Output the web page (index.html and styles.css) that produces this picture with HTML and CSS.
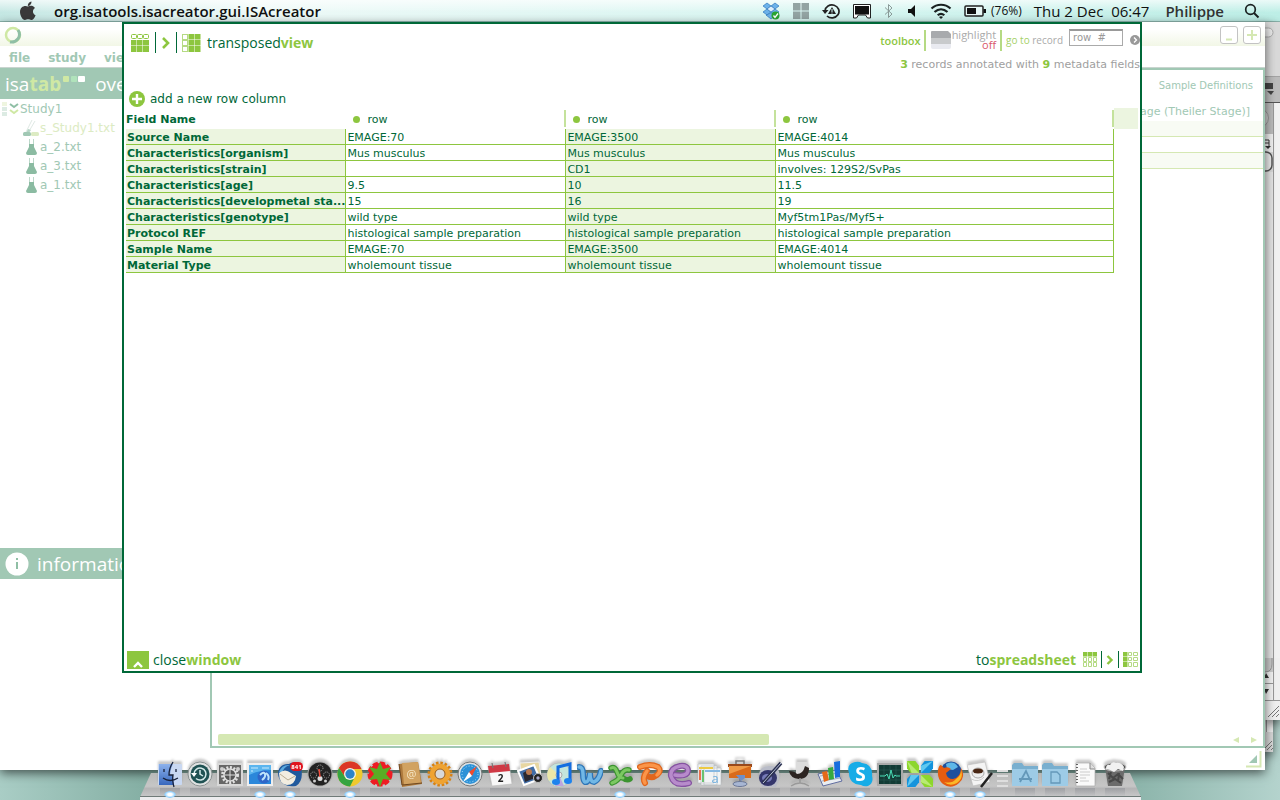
FILE: index.html
```html
<!DOCTYPE html>
<html lang="en">
<head>
<meta charset="utf-8">
<title>ISAcreator</title>
<link rel="stylesheet" href="styles.css">
</head>
<body>
<header class="menubar">
  <svg class="apple" width="18" height="20" viewBox="0 0 18 20"><path fill="#3a3a3a" d="M9 5.600C10.500 4.600 14 4 16 7c-3 2-2.500 6 .6 7.200C15.500 17 14 19 12.300 19c-1.200 0-1.800-.7-3.200-.7s-2 .7-3.200.7C3.500 19 1 14.500 1 11c0-5 4.500-7 8-5.400zM8.800 5C8.600 2.500 10.300.8 12.500.4c.2 2.400-1.500 4.400-3.700 4.600z"/></svg>
  <span class="app-name">org.isatools.isacreator.gui.ISAcreator</span>
  <div class="status">
    <svg width="18" height="18" viewBox="0 0 18 18"><g fill="#6cb2ea" stroke="#2f78bd" stroke-width=".7"><path d="M5 1l4 3-4 3-4-3zM13 1l4 3-4 3-4-3zM5 7l4 3-4 3-4-3zM13 7l4 3-4 3-4-3z"/><path fill="#dceefb" d="M9 4l4 3-4 3-4-3z"/><path d="M4 13l5-2 5 2-5 4z"/></g><circle cx="13.500" cy="13.500" r="4" fill="#2aa532"/><path d="M11.500 13.500l1.500 2 3-4" fill="none" stroke="#fff" stroke-width="1.300"/></svg>
    <svg width="18" height="16" viewBox="0 0 18 16"><path fill="#93a4a3" d="M1 0h7.500v7.500H1zM9.500 0H17v7.500H9.500zM1 8.500h7.500V16H1zM9.500 8.500H17V16H9.500z"/></svg>
    <svg width="18" height="16" viewBox="0 0 18 16"><path d="M3 8a7 6.500 0 1 1 2 5" fill="none" stroke="#222" stroke-width="1.700"/><path fill="#222" d="M0 7h6.500L3 11z"/><path d="M10 4l4 7H6z" fill="#222"/><path d="M10 6v3M10 9.500v1" stroke="#dff" stroke-width="1"/></svg>
    <svg width="20" height="16" viewBox="0 0 20 16"><path d="M1.500 15V1.500h17V15h-3l-2-3h-7l-2 3z" fill="#fff" stroke="#222"/><path fill="#111" d="M3 3h14v8.500H3z"/></svg>
    <svg width="10" height="16" viewBox="0 0 10 16"><path d="M1 4.500l7 6.500-3.500 3.500v-13L8 5 1 11.500" fill="none" stroke="#8b9b99" stroke-width="1"/></svg>
    <svg width="12" height="14" viewBox="0 0 12 14"><path fill="#111" d="M2 5h3l4-4v12L5 9H2z"/></svg>
    <svg width="22" height="16" viewBox="0 0 22 16"><g fill="none" stroke="#1b2222" stroke-width="2.200"><path d="M1.500 5.500c5.500-5 13.500-5 19 0"/><path d="M4.500 9c4-3.600 9-3.600 13 0"/><path d="M7.700 12.300c2-1.800 4.600-1.800 6.600 0"/></g><path fill="#1b2222" d="M9 14q2-1.500 4 0l-2 2z"/></svg>
    <span class="battery"><svg width="22" height="12" viewBox="0 0 22 12"><rect x="1" y="1" width="18" height="10" rx="1" fill="#e8f8f6" stroke="#222" stroke-width="1.500"/><path fill="#111" d="M3 3h9v6H3zM19.500 4H22v4h-2.500z"/></svg><span>(76%)</span></span>
    <time>Thu 2 Dec&nbsp; 06:47</time>
    <span class="user">Philippe</span>
    <svg class="search" width="16" height="16" viewBox="0 0 16 16"><circle cx="6.500" cy="6.500" r="4.800" fill="none" stroke="#1b2222" stroke-width="1.700"/><path d="M10 10l4.500 4.500" stroke="#1b2222" stroke-width="2"/></svg>
  </div>
</header>

<main class="desktop">
  <div class="back-window low"><svg width="15" height="20" viewBox="0 0 15 20"><path d="M5 18l9-9M9 18l5-5M13 18l2-2" stroke="#777"/></svg></div>
  <div class="back-window">
    <svg width="15" height="150" viewBox="6 0 15 150">
      <rect x="-9" y="6" width="23" height="9" rx="4.500" fill="#ececec" stroke="#aaa"/>
      <path d="M0 54.500h21" stroke="#a4a4a4"/><path d="M0 80.500h21" stroke="#555"/><path fill="#bcbcbc" d="M0 55h21v25H0z"/>
      <path fill="#444" d="M2 61h12v6H2zM8 69h7l-3 4z"/>
      <path fill="#bdbdbd" d="M0 81h14v31H0z"/><path fill="#f2f2f2" d="M0 112h14v18H0zM15 81h6v69h-6z"/><path d="M14.500 81v69" stroke="#999"/>
      <circle cx="0" cy="96" r="9.500" fill="#ccc" stroke="#999"/>
      <path d="M4 124v-6h6v6M5 121h5" fill="none" stroke="#333"/><path fill="#333" d="M6 124h6l-3 3z"/>
      <rect x="-12" y="130" width="25" height="19" rx="6" fill="#eee" stroke="#555" stroke-width="1.500"/>
    </svg>
    <svg width="15" height="62" viewBox="6 0 15 62"><path fill="#ccc" d="M0 0h14v42H0z"/><path fill="#f4f4f4" d="M0 14h14v28H0z"/><path d="M13 0v6q0 8-7 8" fill="none" stroke="#999"/><path fill="#333" d="M5 20l2-5 3 5zM5 31h5l-3 5z"/><path d="M0 25.500h14M14.500 0v42M0 42.500h21" stroke="#999"/><path fill="#f0f0f0" d="M0 43h21v19H0zM15 0h6v42h-6z"/><path d="M9 59l11-11M13 59l7-7M17 59l3-3" stroke="#777"/></svg>
  </div>

  <section class="app-window">
    <div class="titlebar">
      <svg width="18" height="20" viewBox="0 0 18 20"><circle cx="9" cy="10" r="7" fill="none" stroke="#cfe8a4" stroke-width="2.500"/><path d="M14 5c4 6-1 13-8 12" fill="none" stroke="#8fbfa5" stroke-width="3"/></svg>
      <div class="win-buttons">
        <button type="button" aria-label="Minimize"><svg width="16" height="16" viewBox="0 0 16 16"><path d="M5 12.500h6" stroke="#d5e8b3" stroke-width="2"/></svg></button>
        <button type="button" aria-label="Maximize"><svg width="16" height="16" viewBox="0 0 16 16"><path d="M3 8h10M8 3v10" stroke="#d5e8b3" stroke-width="2"/></svg></button>
      </div>
    </div>
    <nav class="app-menu"><a href="#file">file</a><a href="#study">study</a><a href="#view">view</a></nav>
    <div class="app-body">
      <aside class="side">
        <h2 class="banner"><span>isa<b>tab</b></span><svg width="22" height="22" viewBox="0 0 22 22"><rect y="3" width="6" height="6" rx="1" fill="#cfe8a4"/><rect x="8" y="3" width="6" height="6" rx="1" fill="#b0e3bb"/><rect x="15" y="3" width="7" height="6" rx="1" fill="#fff"/></svg><span class="over">overview</span></h2>
        <ul class="tree">
          <li class="root"><svg width="16" height="16" viewBox="0 0 16 16"><path fill="#eef5df" d="M1 1h5v4H1z"/><path fill="#dcebe3" d="M1 6h5v4H1zM1 11h5v4H1z"/><path d="M9 3l4 3 4-3" fill="none" stroke="#8fbfa5" stroke-width="2"/><path d="M9 9l4 3 4-3" fill="none" stroke="#cfe8a4" stroke-width="2"/></svg>Study1</li>
          <li class="selected"><svg width="18" height="18" viewBox="0 0 18 18"><path d="M10 1L4 13M13 2L6 14" stroke="#dfe9e4"/><path d="M6 10l3 1-3 4-2-1z" fill="#b7d6c6"/><rect x="1" y="13" width="8" height="4" rx="1.500" fill="#a1c8b4"/><rect x="9" y="13" width="8" height="4" rx="1.500" fill="#dcebc3"/></svg>s_Study1.txt</li>
          <li><svg width="18" height="18" viewBox="0 0 18 18"><path d="M7.500 1v5M11.500 1v5" stroke="#bcd8ca"/><path fill="#8bbba2" d="M7 6h5v3l3 6q0 2-2 2H6q-2 0-2-2l3-6z"/></svg>a_2.txt</li>
          <li><svg width="18" height="18" viewBox="0 0 18 18"><path d="M7.500 1v5M11.500 1v5" stroke="#bcd8ca"/><path fill="#8bbba2" d="M7 6h5v3l3 6q0 2-2 2H6q-2 0-2-2l3-6z"/></svg>a_3.txt</li>
          <li><svg width="18" height="18" viewBox="0 0 18 18"><path d="M7.500 1v5M11.500 1v5" stroke="#bcd8ca"/><path fill="#8bbba2" d="M7 6h5v3l3 6q0 2-2 2H6q-2 0-2-2l3-6z"/></svg>a_1.txt</li>
        </ul>
        <div class="info">
          <h2 class="banner"><svg width="24" height="24" viewBox="0 0 24 24"><circle cx="12" cy="12" r="11.500" fill="#fff"/><path d="M11 10h2v7h-2zM11 6h2v2h-2z" fill="#8fbfa5"/></svg><span>information</span></h2>
        </div>
      </aside>
      <section class="sheet">
        <p class="sheet-name">Sample Definitions</p>
        <p class="sheet-col">Stage (Theiler Stage)]</p>
        <div class="stripe tint"></div><div class="stripe"></div><div class="stripe tint"></div>
        <div class="hscroll"><span class="thumb"></span><svg width="24" height="8" viewBox="0 0 24 8"><path fill="#d5e8b3" d="M6 1v6L0 4zM18 1v6l6-3z"/></svg></div>
      </section>
    </div>
    <div class="app-foot"><svg width="17" height="17" viewBox="0 0 17 17"><path d="M0 15.500h14.500V0" fill="none" stroke="#d5e8b3" stroke-width="2"/><path fill="#a1c8b4" d="M11 4v8H3z"/></svg></div>
  </section>

  <section class="popup">
    <header class="pop-head">
      <h1 class="title">
        <svg width="20" height="20" viewBox="0 0 20 20"><g fill="none" stroke="#8dc63f"><rect x="1.500" y="1.500" width="5" height="4" rx="1"/><rect x="7.500" y="1.500" width="5" height="4" rx="1"/><rect x="13.500" y="1.500" width="5" height="4" rx="1"/></g><path fill="#8dc63f" d="M1 7h5.500v5.500H1zM7 7h5.500v5.500H7zM13 7h6v5.500h-6zM1 13h5.500v6H1zM7 13h5.500v6H7zM13 13h6v6h-6z"/></svg>
        <i class="bar dark"></i>
        <svg width="10" height="12" viewBox="0 0 10 12"><path d="M2 1l5 5-5 5" fill="none" stroke="#8dc63f" stroke-width="2.600"/></svg>
        <i class="bar dark"></i>
        <svg width="20" height="20" viewBox="0 0 20 20"><g fill="none" stroke="#b5da83"><rect x=".5" y="1.500" width="5" height="5"/><rect x=".5" y="7.500" width="5" height="5"/><rect x=".5" y="13.500" width="5" height="5"/></g><path fill="#8dc63f" d="M6.500 1H12v5.500H6.500zM12.500 1h6v5.500h-6zM6.500 7H12v5.500H6.500zM12.500 7h6v5.500h-6zM6.500 13H12v6H6.500zM12.500 13h6v6h-6z"/></svg>
        <span class="title-text">transposed<b>view</b></span>
      </h1>
      <div class="tools">
        <div class="toolbar">
          <span class="toolbox">toolbox</span><i class="bar"></i>
          <button type="button" class="highlight"><svg width="20" height="20" viewBox="0 0 20 20"><path fill="#a8aaad" d="M0 2q0-1 1-1h16l3 3v6H0z"/><path fill="#c8cacc" d="M0 8h20v6H0z"/><path fill="#e9eaf0" d="M0 14h20v3q0 2-2 2H2q-2 0-2-2z"/></svg><span>highlight<em>off</em></span></button>
          <i class="bar"></i>
          <label class="goto" for="rowno"><span>go to</span> record</label>
          <input id="rowno" type="text" placeholder="row  #">
          <button type="button" class="go" aria-label="Go"><svg width="10" height="10" viewBox="0 0 10 10"><circle cx="5" cy="5" r="5" fill="#999"/><path d="M4 2.500L6.500 5 4 7.500" fill="none" stroke="#fff" stroke-width="1.300"/></svg></button>
        </div>
        <p class="summary"><b>3</b> records annotated with <b>9</b> metadata fields</p>
      </div>
    </header>
    <button type="button" class="add"><svg width="16" height="16" viewBox="0 0 16 16"><circle cx="8" cy="8" r="8" fill="#8dc63f"/><path d="M8 3v10M3 8h10" stroke="#fff" stroke-width="2.400"/></svg>add a new row column</button>
    <div class="grid">
      <table>
        <colgroup><col class="c1"><col class="c2"><col class="c3"><col></colgroup>
        <thead><tr><th class="first">Field Name</th><th><span>row</span></th><th><span>row</span></th><th><span>row</span></th></tr></thead>
        <tbody>
          <tr><th>Source Name</th><td>EMAGE:70</td><td>EMAGE:3500</td><td>EMAGE:4014</td></tr>
          <tr><th>Characteristics[organism]</th><td>Mus musculus</td><td>Mus musculus</td><td>Mus musculus</td></tr>
          <tr><th>Characteristics[strain]</th><td></td><td>CD1</td><td>involves: 129S2/SvPas</td></tr>
          <tr><th>Characteristics[age]</th><td>9.5</td><td>10</td><td>11.5</td></tr>
          <tr><th>Characteristics[developmetal sta...</th><td>15</td><td>16</td><td>19</td></tr>
          <tr><th>Characteristics[genotype]</th><td>wild type</td><td>wild type</td><td>Myf5tm1Pas/Myf5+</td></tr>
          <tr><th>Protocol REF</th><td>histological sample preparation</td><td>histological sample preparation</td><td>histological sample preparation</td></tr>
          <tr><th>Sample Name</th><td>EMAGE:70</td><td>EMAGE:3500</td><td>EMAGE:4014</td></tr>
          <tr><th>Material Type</th><td>wholemount tissue</td><td>wholemount tissue</td><td>wholemount tissue</td></tr>
        </tbody>
      </table>
      <div class="corner"></div>
    </div>
    <footer class="pop-foot">
      <button type="button"><svg width="22" height="18" viewBox="0 0 22 18"><path fill="#8dc63f" d="M0 0h22v18H0z"/><path d="M7 16l4-4 4 4" fill="none" stroke="#fff" stroke-width="2.400"/></svg><span>close<b>window</b></span></button>
      <button type="button" class="to-sheet"><span>to<b>spreadsheet</b></span>
        <svg width="14" height="15" viewBox="0 0 14 15"><path fill="#8dc63f" d="M0 0h4.500v4.500H0zM5 0h4v4.500H5zM9.500 0H14v4.500H9.500z"/><g fill="none" stroke="#b5da83"><path d="M.5 5.500h3v4h-3zM5.500 5.500h3v4h-3zM10.500 5.500h3v4h-3zM.5 10.500h3v4h-3zM5.500 10.500h3v4h-3zM10.500 10.500h3v4h-3z"/></g></svg>
        <i class="bar dark"></i>
        <svg width="8" height="10" viewBox="0 0 8 10"><path d="M1.500 1l4 4-4 4" fill="none" stroke="#8dc63f" stroke-width="2.400"/></svg>
        <i class="bar dark"></i>
        <svg width="15" height="15" viewBox="0 0 15 15"><path fill="#8dc63f" d="M0 0h4.500v4.500H0zM0 5h4.500v4.500H0zM0 10h4.500v5H0z"/><g fill="none" stroke="#b5da83"><path d="M5.500.5h3v3h-3zM10.500.5h4v3h-4zM5.500 5.500h3v3h-3zM10.500 5.500h4v3h-4zM5.500 10.500h3v4h-3zM10.500 10.500h4v4h-4z"/></g></svg>
      </button>
    </footer>
  </section>

  <nav class="dock" aria-label="Dock">
    <svg class="shelf" viewBox="0 0 1000 27" preserveAspectRatio="none"><defs><linearGradient id="sh" x2="0" y2="1"><stop offset="0" stop-color="#b9bab9"/><stop offset=".55" stop-color="#c6c6c6"/><stop offset=".65" stop-color="#b4b4b5"/><stop offset="1" stop-color="#c9c9ca"/></linearGradient></defs><path fill="url(#sh)" d="M11 0h978l11 24H0z"/><path fill="#6f7a78" d="M0 23h1000v1H0z"/><path fill="#ececee" d="M0 24h1000v3H0z"/></svg>
    <a class="on" href="#finder" aria-label="Finder"><svg viewBox="0 0 26 26"><defs><linearGradient id="fb" x2="0" y2="1"><stop offset="0" stop-color="#8db2ec"/><stop offset="1" stop-color="#3767bd"/></linearGradient></defs><rect x="1" y="3" width="24" height="21" rx="1" fill="#c9d8f2"/><path fill="url(#fb)" d="M2 3h14q-3 6-3 11h3q0 5 1 10H2z"/><path d="M16 1q-4 6-4 13h4q-1 5 1 12M6 17q7 5 15 0M7 8v3M19 8v3" fill="none" stroke="#18213a" stroke-width="1.300"/></svg></a>
    <a href="#timemachine" aria-label="Time Machine"><svg viewBox="0 0 26 26"><circle cx="13" cy="13" r="12" fill="#dfe2e2" stroke="#8a9191"/><circle cx="13" cy="13" r="9.500" fill="#205253"/><path d="M7 13a6 6 0 1 1 2 4.500M13 9v4l3 2" fill="none" stroke="#d5eaea" stroke-width="1.500"/><path fill="#fff" d="M4 12h6l-3 4z"/></svg></a>
    <a href="#prefs" aria-label="System Preferences"><svg viewBox="0 0 26 26"><rect x="1" y="3" width="24" height="21" fill="#666" stroke="#d8d8d8" stroke-width="2"/><circle cx="13" cy="14" r="7.500" fill="none" stroke="#e0e0e0" stroke-width="3" stroke-dasharray="2 1.500"/><circle cx="13" cy="14" r="6" fill="#555" stroke="#ddd" stroke-width="1.500"/><path d="M13 9v10M8 14h10" stroke="#ddd"/><circle cx="5" cy="8" r="2" fill="#ccc"/><circle cx="21" cy="8" r="2" fill="#ccc"/></svg></a>
    <a class="on" href="#preview" aria-label="Remote Desktop"><svg viewBox="0 0 26 26"><rect x="1" y="3" width="24" height="21" fill="#2b87da" stroke="#eee" stroke-width="2"/><path fill="#5cb5ee" d="M2 4h22v5Q12 9 2 14z"/><path d="M4 7h7M15 7h7M4 10h2" stroke="#c9eafc"/><circle cx="17" cy="16" r="6.500" fill="#2f66c8"/><path d="M13 14q4-4 5-1t-3 6M19 12q4 3 2 7" fill="none" stroke="#bee3fb" stroke-width="2"/></svg></a>
    <a class="on" href="#mail" aria-label="Thunderbird"><svg viewBox="0 0 26 26"><path fill="#20599c" d="M2 17C-1 9 4 2 12 3q6-4 12 3 3 14-5 19Q6 27 2 17z"/><path fill="#5baae0" d="M2 11q3-8 11-7-7 2-8 9z"/><path fill="#f2ede0" d="M2 12q6-5 12 0l5 3q-1 9-9 9-8-1-8-12z"/><path d="M3 13l8 6 7-4" fill="none" stroke="#b9ac91"/><rect x="13" y="1" width="13" height="9" rx="4.500" fill="#e1131d"/><text x="19.500" y="8" class="badge">841</text></svg></a>
    <a href="#dashboard" aria-label="Dashboard"><svg viewBox="0 0 26 26"><circle cx="13" cy="13" r="12.500" fill="#aaa"/><circle cx="13" cy="13" r="11.500" fill="#222"/><g fill="none" stroke="#aaa" stroke-dasharray="1 1"><circle cx="13" cy="7" r="3"/><circle cx="6.500" cy="14" r="3"/><circle cx="19.500" cy="14" r="3"/></g><circle cx="13" cy="17.500" r="2.500" fill="#ddd"/><circle cx="7.500" cy="20" r="1.500" fill="#ccc"/><circle cx="18.500" cy="20" r="1.500" fill="#ccc"/><path d="M13 16L12 8" stroke="#f04c3c" stroke-width="1.500"/></svg></a>
    <a class="on" href="#chrome" aria-label="Chrome"><svg viewBox="0 0 26 26"><circle cx="13" cy="13" r="12.500" fill="#efc92e"/><path fill="#dc3525" d="M2 7A12.500 12.500 0 0 1 24.500 8H13l-5 8z"/><path fill="#35a440" d="M2 7a12.500 12.500 0 0 0 11 18.500l4.500-9L8 16z"/><circle cx="13" cy="13" r="6" fill="#f4f4e9"/><circle cx="13" cy="13" r="4.700" fill="#2c84c9"/></svg></a>
    <a href="#flower" aria-label="Papers"><svg viewBox="0 0 26 26"><circle cx="13" cy="13" r="11" fill="#ee1c23"/><circle cx="13" cy="13" r="10.500" fill="none" stroke="#ee1c23" stroke-width="4" stroke-dasharray="5 2"/><path fill="#5aad25" d="M13 1l3 7 8-2-5 7 5 6-8-1-3 8-3-8-8 1 5-6-5-7 8 2z"/><path fill="#9ed534" d="M13 4v9L6 8l7 5-5 4 5-4 5 5-5-5 6-5-6 5z"/></svg></a>
    <a href="#contacts" aria-label="Address Book"><svg viewBox="0 0 26 26"><path fill="#ae7a3d" d="M2 3l19-2 4 22-20 3z"/><path fill="#d1a261" d="M5 2l16-1 3 21-17 2z"/><path d="M2 3l3 21 20-2" fill="none" stroke="#6f4820"/><text x="14.500" y="17" class="at">@</text></svg></a>
    <a href="#gear" aria-label="Utilities"><svg viewBox="0 0 26 26"><circle cx="13" cy="13" r="11" fill="none" stroke="#d78214" stroke-width="3" stroke-dasharray="2.500 1.820"/><circle cx="13" cy="13" r="7.800" fill="none" stroke="#efa332" stroke-width="5"/><circle cx="13" cy="13" r="5" fill="#d8d8d8" stroke="#a35f14"/></svg></a>
    <a href="#safari" aria-label="Safari"><svg viewBox="0 0 26 26"><circle cx="13" cy="13" r="12" fill="#dce1e4" stroke="#777"/><circle cx="13" cy="13" r="10" fill="#2c91d7"/><circle cx="13" cy="13" r="8" fill="none" stroke="#b7e3fa" stroke-dasharray="1 2"/><path fill="#f04b2d" d="M20 5l-5 10-3-4z"/><path fill="#fff" d="M6 21l6-10 3 4z"/></svg></a>
    <a href="#calendar" aria-label="iCal"><svg viewBox="0 0 26 26"><path fill="#f8f8f8" stroke="#bbb" stroke-width=".6" d="M1 5l21-2 3 20-20 2z"/><path fill="#cf3945" d="M1 5l21-2 1 7-21 2z"/><path d="M5 2l1 5M18 1l1 5" stroke="#777" stroke-width="1.200"/><text x="13.500" y="21" class="day">2</text></svg></a>
    <a href="#photos" aria-label="iPhoto"><svg viewBox="0 0 26 26"><path fill="#e7d6a2" stroke="#eee" d="M3 2l19-1 2 14H4z"/><path fill="#416ca5" stroke="#fff" stroke-width="2" d="M1 10L17 4l6 14L7 24z"/><path fill="#2a2830" d="M8 21l-2-9 5-3 7 8z"/><circle cx="12" cy="11" r="3" fill="#b77952"/><circle cx="21" cy="17" r="4.500" fill="#222" stroke="#bbb"/><circle cx="21" cy="17" r="1.700" fill="#aac"/></svg></a>
    <a href="#music" aria-label="iTunes"><svg viewBox="0 0 26 26"><circle cx="12" cy="14" r="12" fill="#c5e5dc" stroke="#aaa" stroke-width=".5"/><path fill="#ece7a7" d="M12 14L2 20A12 12 0 0 1 3 6z"/><path fill="#bda5dd" d="M12 14L8 25h9z"/><circle cx="12" cy="14" r="3" fill="#eee" stroke="#aaa"/><path d="M11 20V6l12-3v16" fill="none" stroke="#146de0" stroke-width="3"/><ellipse cx="9" cy="21" rx="4" ry="3" fill="#1d83ee"/><ellipse cx="21" cy="20" rx="4" ry="3" fill="#1d83ee"/></svg></a>
    <a href="#word" aria-label="Word"><svg viewBox="0 0 26 26"><path d="M2 6q4 0 4 7t2 8q4 1 5-9 0 9 4 9 5-2 7-11" fill="none" stroke="#2d75b7" stroke-width="6" stroke-linecap="round"/><path d="M2 6q4 0 4 7t2 8q4 1 5-9 0 9 4 9 5-2 7-11" fill="none" stroke="#71b8e6" stroke-width="3.500" stroke-linecap="round"/></svg></a>
    <a class="on" href="#excel" aria-label="Excel"><svg viewBox="0 0 26 26"><path d="M4 7q4-2 6 4t6 6q4 3 7 1M22 9q-5-1-8 5T5 22" fill="none" stroke="#3b9330" stroke-width="5.500" stroke-linecap="round"/><path d="M4 7q4-2 6 4t6 6M22 9q-5-1-8 5T5 22" fill="none" stroke="#7cc862" stroke-width="3" stroke-linecap="round"/></svg></a>
    <a href="#slides" aria-label="PowerPoint"><svg viewBox="0 0 26 26"><path d="M3 6q10-4 18 0 4 4-1 8-5 4-10 1M10 10q-5 7-2 12" fill="none" stroke="#e0661d" stroke-width="6" stroke-linecap="round"/><path d="M3 6q10-4 18 0 4 4-1 8M10 10q-5 7-2 12" fill="none" stroke="#fb9549" stroke-width="3.500" stroke-linecap="round"/></svg></a>
    <a href="#entourage" aria-label="Entourage"><svg viewBox="0 0 26 26"><path d="M8 14q12 2 13-4 0-6-8-5Q3 7 4 15q3 11 18 7" fill="none" stroke="#8552a1" stroke-width="6" stroke-linecap="round"/><path d="M8 14q12 2 13-4 0-6-8-5Q3 7 4 15q3 11 18 7" fill="none" stroke="#b78bcb" stroke-width="3.500" stroke-linecap="round"/></svg></a>
    <a href="#docs" aria-label="Documents"><svg viewBox="0 0 26 26"><g fill="#f2f4f5" stroke="#b6bcc0" stroke-width=".6"><path d="M1 3h16v19H1zM4 5h16v19H4zM7 7h17v17H7z"/></g><path fill="#ecc944" d="M2 6h14v2H2z"/><path fill="#ea704e" d="M2 9h2v10H2z"/><path fill="#6ac271" d="M5 9h2v12H5z"/><path fill="#86b8e2" d="M8 9h15v2H8z"/><text x="18" y="22" class="doc-a">a</text></svg></a>
    <a href="#keynote" aria-label="Keynote"><svg viewBox="0 0 26 26"><path fill="#99491b" d="M1 3h24v3H1z"/><path fill="#d96b1b" d="M2 5h22v12H2z"/><path fill="#ef9a47" d="M2 5h22L2 13z"/><path d="M9 3V0h8v3M13 14v8" fill="none" stroke="#777" stroke-width="1.500"/><path fill="#6e8fc9" d="M9 14h9v3l-4 3z"/><ellipse cx="13" cy="23" rx="7" ry="2.500" fill="#a7b6d3" stroke="#6b7896"/></svg></a>
    <a href="#pages" aria-label="Pages"><svg viewBox="0 0 26 26"><path fill="#b9bcc8" d="M2 15q0-11 12-10 10 0 8 13l-3 8H5z"/><ellipse cx="11" cy="17" rx="9" ry="8" fill="#34366c"/><ellipse cx="10" cy="17" rx="5" ry="4" fill="#777bb8"/><path d="M6 22L24 2" stroke="#2b3150" stroke-width="3.500"/><path d="M6 22L24 2" stroke="#b8bfd6" stroke-width="1"/></svg></a>
    <a href="#chair" aria-label="Chair"><svg viewBox="0 0 26 26"><path fill="#dcdcdc" d="M9 1h12v12H9z"/><path fill="#2c2522" d="M2 10q6 0 8 3 6 0 8-8l4 2q0 11-10 11-9-1-10-8z"/><path d="M13 17v5M4 25q9-6 18 0" fill="none" stroke="#999" stroke-width="1.500"/></svg></a>
    <a href="#numbers" aria-label="Numbers"><svg viewBox="0 0 26 26"><path fill="#e9edf1" stroke="#606da0" d="M1 13l18-4 6 11L6 25z"/><path d="M3 15l18-3M5 20l18-3" stroke="#9aa8c4"/><path fill="#e46917" d="M5 11l5-1 2 9-5 2z"/><path fill="#36aa42" d="M11 7l5-1 1 12-5 1z"/><path fill="#176ede" d="M17 1l6-1v16l-5 1z"/></svg></a>
    <a class="on" href="#skype" aria-label="Skype"><svg viewBox="0 0 26 26"><path fill="#16ace7" d="M8 1q4-1 7 1 11 1 10 13 2 7-4 10-4 1-7-1Q2 23 2 12-1 3 8 1z"/><text x="13.500" y="20" class="skype">S</text></svg></a>
    <a href="#activity" aria-label="Activity Monitor"><svg viewBox="0 0 26 26"><rect x="1" y="3" width="24" height="21" fill="#123b35" stroke="#aaa" stroke-width="2"/><path d="M2 9h22M2 14h22M2 19h22M7 4v19M13 4v19M19 4v19" stroke="#2d5d55" stroke-width=".6"/><path d="M3 15h5l2-2 2 5 2-9 2 8 2-3 1 1h4" fill="none" stroke="#48dcb4" stroke-width="1"/></svg></a>
    <a href="#tiles" aria-label="Tiles"><svg viewBox="0 0 28 28"><path fill="#8dd62d" d="M0 0h9l4 5v8H4L0 8z"/><path fill="#1593dc" d="M15 5l4-5h9v8l-4 5h-9z"/><path fill="#1593dc" d="M4 15h9v8l-4 5H0v-9z"/><path fill="#8dd62d" d="M15 15h9l4 4v9h-9l-4-5z"/><path fill="#b8ea73" d="M0 0l13 13H5zM28 28L15 15v8z"/><path fill="#60c8f0" d="M28 0L15 13V5zM0 28l13-13H4z"/></svg></a>
    <a class="on" href="#firefox" aria-label="Firefox"><svg viewBox="0 0 26 26"><circle cx="14" cy="11" r="10.500" fill="#1d4f9d"/><path fill="#5eb7e8" d="M9 3q8-4 12 3l-5 3-6-1z"/><path fill="#e65c10" d="M1 9q1-5 3-5l3 3q4-2 7 1l-5 4q1 6 7 6 8-2 8-11 5 9-2 15-8 7-16 1-6-5-5-14z"/><path fill="#fbb827" d="M24 9q3 8-4 13-7 4-13-1 8 2 12-3 5-3 5-9z"/></svg></a>
    <a class="on" href="#java" aria-label="Java"><svg viewBox="0 0 26 26"><path fill="#f4f4f4" stroke="#bbb" stroke-width=".6" d="M0 4l18-3 5 20-17 4z"/><ellipse cx="11" cy="12" rx="6" ry="5" fill="#eee" stroke="#aaa"/><ellipse cx="11" cy="10" rx="5" ry="2.500" fill="#4a2815"/><path d="M4 18q8 4 13-2" fill="none" stroke="#ccc"/><path d="M25 12L14 26" stroke="#222" stroke-width="2.500"/></svg></a>
    <span class="divider"></span>
    <a href="#apps" aria-label="Applications"><svg viewBox="0 0 26 26"><path fill="#79afcf" d="M0 4l2-2h8l2 3h14v20H0z"/><path fill="#9dcbe6" d="M0 8h26v17H0z"/><path d="M8 21l6-11 5 11M7 18h13" fill="none" stroke="#6498b9" stroke-width="1.800"/></svg></a>
    <a href="#documents" aria-label="Documents folder"><svg viewBox="0 0 26 26"><path fill="#79afcf" d="M0 4l2-2h8l2 3h14v20H0z"/><path fill="#9dcbe6" d="M0 8h26v17H0z"/><path d="M9 11h6l3 3v8H9z" fill="none" stroke="#6498b9" stroke-width="1.300"/></svg></a>
    <a href="#file-doc" aria-label="Text file"><svg viewBox="0 0 26 26"><path fill="#fafafa" stroke="#aaa" stroke-width=".7" d="M4 2h14l5 5v18H4z"/><path d="M18 2v6h5" fill="#ddd" stroke="#888"/><path d="M8 8h7M8 11h10M8 14h10M8 17h6M8 20h9" stroke="#ccc"/><path d="M5 3v21" stroke="#333" stroke-width="1.500" stroke-dasharray="1 2"/></svg></a>
    <a href="#trash" aria-label="Trash"><svg viewBox="0 0 26 26"><path fill="#6b6b6b" d="M3 6h20l-3 19H6z"/><path d="M6 12l5 5 5-4 5 5M7 21l6-3 6 4M9 11l-2 7M17 12l-1 9" fill="none" stroke="#484848" stroke-width="2"/><ellipse cx="13" cy="6" rx="11" ry="4" fill="#555" stroke="#bbb"/><path fill="#f1f1f1" d="M4 8q0-5 4-4 2-4 6-2 5-1 8 4l-1 4-5-2-4 3-4-2z"/></svg></a>
  </nav>
</main>
</body>
</html>
```

FILE: styles.css
```css
* { box-sizing: border-box; }
body {
  margin: 0;
  min-height: 100vh;
  display: flex;
  flex-direction: column;
  overflow: hidden;
  font-family: "DejaVu Sans", sans-serif;
  background: linear-gradient(90deg, #a9cdc5, #86b0a5 11%, #8ab3a9 88%, #b4d3cd);
  color: #006838;
}
h1, h2, p, ul { margin: 0; padding: 0; font-weight: normal; }
button { padding: 0; border: 0; background: none; font: inherit; color: inherit; }
svg { flex: none; display: block; }
a { color: inherit; text-decoration: none; }

.menubar {
  height: 22px;
  display: flex;
  align-items: center;
  padding: 0 20px 0 19px;
  background: linear-gradient(rgba(255,255,255,.7), rgba(255,255,255,0) 60%), linear-gradient(90deg, #c5e8e4, #eefaf8 20%, #d4f5f0 70%, #bdeee6);
  border-bottom: 1px solid #8fb9b1;
  font: 15px "Open Sans", sans-serif;
  color: #111;
}
.app-name { margin-left: 17px; font-weight: 600; }
.status { margin-left: auto; display: flex; align-items: center; gap: 12px; }
.battery { display: flex; align-items: center; gap: 5px; font-size: 12px; }
.user { font-weight: 600; margin-left: 4px; color: #333; }
.search { margin-left: 8px; }

.desktop { position: relative; flex: 1; }

.back-window {
  position: absolute;
  top: 0;
  right: 0;
  bottom: 80px;
  width: 15px;
  display: flex;
  flex-direction: column;
  justify-content: space-between;
  background: linear-gradient(90deg, #e6e6e6 8px, #999 8px, #999 9px, #f2f2f2 9px);
  border-radius: 0 5px 0 0;
  box-shadow: 0 4px 10px rgba(0,0,0,.5);
}
.back-window > svg:first-child { background: #d9d9d9; }
.back-window.low { bottom: 48px; right: 7px; justify-content: flex-end; }

.app-window {
  position: absolute;
  top: 0;
  left: 0;
  right: 15px;
  bottom: 30px;
  display: flex;
  flex-direction: column;
  background: #fff;
  box-shadow: 0 3px 10px rgba(0,0,0,.6);
  color: #a1c8b4;
}
.titlebar {
  height: 24px;
  display: flex;
  align-items: center;
  justify-content: space-between;
  padding: 2px 4px 0;
  background: linear-gradient(#fff 30%, #f2f7e6);
}
.win-buttons { display: flex; gap: 5px; }
.win-buttons button { border: 1px solid #c3c3c3; border-radius: 3px; background: #fff; }
.app-menu { height: 22px; display: flex; align-items: center; gap: 18px; padding: 2px 0 0 9px; border-bottom: 1px solid #c9d4cf; font-size: 12px; font-weight: bold; }
.app-body { flex: 1; display: flex; }
.side { width: 210px; display: flex; flex-direction: column; }
.banner { height: 31px; display: flex; align-items: center; gap: 2px; padding: 0 88px 0 5px; overflow: hidden; background: #a1c8b4; color: #fff; font: 19px "Open Sans", sans-serif; }
.banner b { color: #cfe8a4; }
.banner span:last-child { flex: 1; min-width: 0; overflow: hidden; }
.over { margin-left: 8px; }
.tree { flex: 1; list-style: none; font-size: 12px; }
.tree li { height: 19px; display: flex; align-items: center; gap: 0; padding-left: 22px; }
.tree .root { padding-left: 1px; gap: 3px; }
.tree .root svg { overflow: visible; }
.tree .selected { color: #dcebc3; }
.info { height: 200px; }
.info .banner { gap: 8px; }
.sheet { flex: 1; display: flex; flex-direction: column; border: 2px solid #a1c8b4; }
.sheet p { text-align: right; font-size: 11px; line-height: 16px; }
.sheet .sheet-name { padding: 8px 10px 10px 0; font-size: 10px; }
.sheet-col { padding: 0 13px 1px 0; }
.stripe { height: 16px; border-bottom: 1px solid #d5e8b3; }
.tint { background: #f8fbf4; }
.hscroll { margin-top: auto; display: flex; align-items: center; justify-content: space-between; padding: 0 6px 1px; }
.thumb { width: 53%; height: 11px; background: #d5e8b3; border-radius: 2px; }
.app-foot { height: 22px; display: flex; justify-content: flex-end; align-items: center; padding-right: 2px; }

.popup {
  position: absolute;
  top: 0;
  left: 122px;
  right: 138px;
  bottom: 127px;
  display: flex;
  flex-direction: column;
  border: 2px solid #006838;
  background: #fff;
}
.pop-head { height: 65px; display: flex; justify-content: space-between; }
.title { display: flex; align-items: center; height: 37px; gap: 5px; padding-left: 6px; }
.title-text { font: 14px "Open Sans", sans-serif; }
.title b, .pop-foot b { color: #8dc63f; }
.bar { width: 2px; height: 21px; background: #b5da83; }
.bar.dark { width: 1px; background: #006838; }
.toolbar { height: 32px; display: flex; align-items: center; justify-content: flex-end; gap: 4px; font: 11px "Open Sans", sans-serif; color: #aaa; }
.toolbox { color: #8dc63f; font-weight: 600; }
.toolbox + .bar { margin: 0 1px 0 -1px; }
.highlight { display: flex; align-items: center; gap: 1px; line-height: 10px; text-align: right; }
.highlight em { display: block; font-style: normal; color: #d9566a; }
.goto { font-size: 10px; }
.goto span { color: #a5d167; }
.toolbar input { width: 54px; height: 17px; margin: 0 3px 6px 2px; padding: 0 3px; border: 1px solid #aaa; border-top: 2px solid #999; font: 10px "DejaVu Sans", sans-serif; white-space: pre; }
.toolbar input::placeholder { color: #999; opacity: 1; }
.summary { padding-top: 1px; font-size: 11px; line-height: 16px; text-align: right; color: #a0a0a0; }
.summary b { color: #8dc63f; }
.add { align-self: flex-start; display: flex; align-items: center; gap: 5px; height: 19px; padding-left: 5px; font-size: 12px; }
.grid { display: flex; padding: 0 2px; }
table { flex: 1; min-width: 0; table-layout: fixed; border-collapse: separate; border-spacing: 0; font-size: 11px; line-height: 13px; }
.c1, .c2 { width: 220px; }
.c3 { width: 210px; }
th, td { padding: 2px 0 0 1px; text-align: left; white-space: nowrap; overflow: hidden; border-right: 1px solid #8dc63f; border-bottom: 1px solid #8dc63f; }
tbody tr { height: 16px; }
tbody th, td:nth-child(3) { background: #ecf5e0; }
thead th { height: 21px; padding: 0; border: 0; font-weight: normal; }
thead .first { padding-top: 2px; font-weight: bold; }
thead span { display: flex; align-items: center; gap: 7px; height: 17px; padding: 2px 0 0 7px; border-right: 2px solid #c4e29c; }
thead span::before { content: ""; width: 7px; height: 7px; border-radius: 50%; background: #8dc63f; }
.corner { width: 24px; height: 21px; background: #ecf5e0; }
.pop-foot { margin-top: auto; display: flex; justify-content: space-between; height: 23px; padding: 0 2px 0 3px; font: 14px "Open Sans", sans-serif; }
.pop-foot button { display: flex; align-items: center; gap: 4px; }
.pop-foot .bar { height: 17px; }
.to-sheet span { margin-right: 3px; }

.dock { position: absolute; left: 0; right: 0; bottom: 0; margin: 0 auto; width: fit-content; padding: 0 13px 12px 17px; display: flex; gap: 4px; }
.dock .shelf { position: absolute; left: 0; bottom: 0; width: 100%; height: 27px; }
.dock a { position: relative; width: 26px; height: 28px; }
.dock a svg { width: 26px; height: 28px; filter: drop-shadow(0 -3px 1px rgba(120,120,120,.4)); }
.dock a::after { content: ""; position: absolute; left: 3px; top: 28px; width: 20px; height: 9px; background: linear-gradient(rgba(110,115,125,.3), transparent); }
.dock .on::before { content: ""; position: absolute; z-index: 1; left: 7px; top: 31px; width: 12px; height: 7px; border-radius: 50%; background: radial-gradient(#fff 25%, #8fd0ff 60%, transparent 75%); }
.divider { position: relative; width: 11px; height: 18px; margin-top: 10px; background: repeating-linear-gradient(#dedede 0 2px, transparent 2px 5px); }
.dock text { text-anchor: middle; font-family: "Open Sans", sans-serif; }
.badge { font-size: 6px; font-weight: bold; fill: #fff; }
.at { font-size: 11px; fill: #f5e6c5; }
.day { font-size: 10px; font-weight: bold; fill: #222; }
.doc-a { font-size: 13px; fill: #6faede; }
.skype { font-size: 19px; font-weight: bold; fill: #fff; }
```
